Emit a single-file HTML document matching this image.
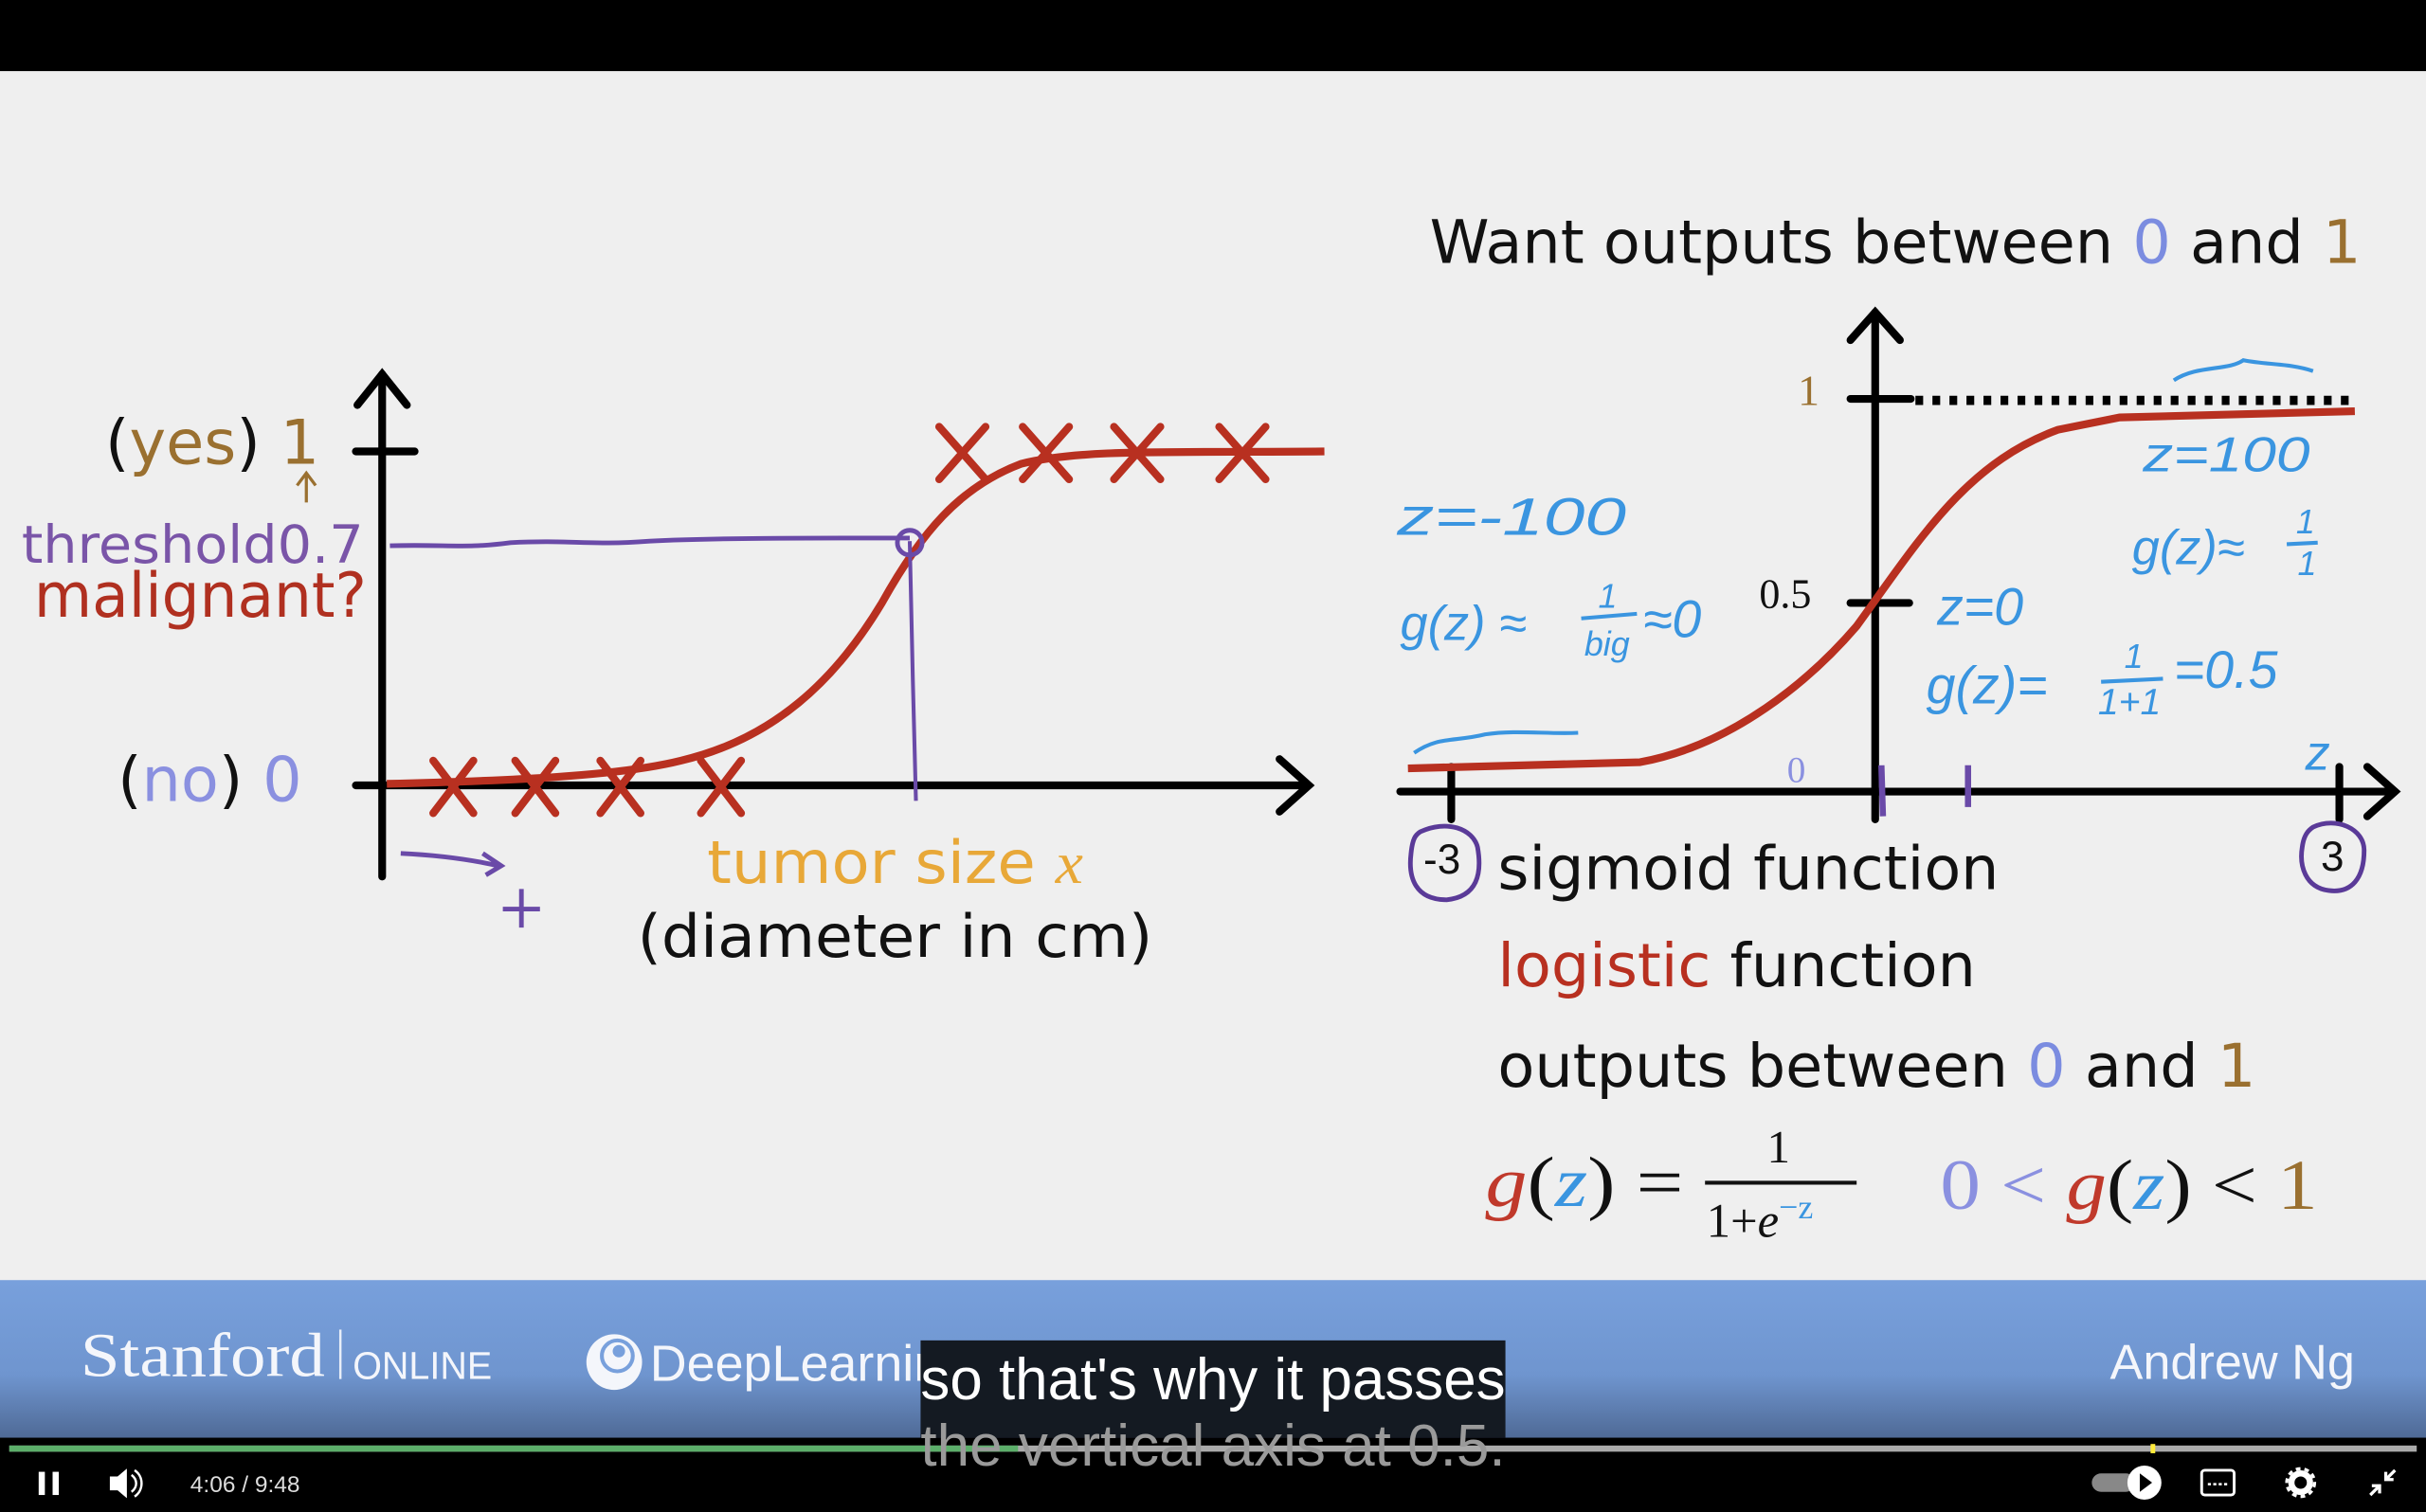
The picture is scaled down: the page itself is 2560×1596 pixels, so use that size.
<!DOCTYPE html>
<html><head><meta charset="utf-8"><style>
html,body{margin:0;padding:0;background:#000;width:2560px;height:1596px;overflow:hidden}
svg{display:block}
</style></head><body>
<svg width="2560" height="1596" viewBox="0 0 1568 978" preserveAspectRatio="none" xmlns="http://www.w3.org/2000/svg" font-family="DejaVu Sans, Liberation Sans, sans-serif">
<defs>
<linearGradient id="ft" x1="0" y1="0" x2="0" y2="1">
<stop offset="0" stop-color="#78a0dc"/><stop offset="0.6" stop-color="#6f95cf"/><stop offset="1" stop-color="#4f6a96"/>
</linearGradient>
</defs>
<rect x="0" y="0" width="1568" height="46" fill="#000"/>
<rect x="0" y="46" width="1568" height="783" fill="#efefef"/>
<rect x="0" y="828" width="1568" height="102" fill="url(#ft)"/>
<rect x="0" y="930" width="1568" height="48" fill="#000"/>

<!-- LEFT GRAPH -->
<g stroke="#000" stroke-width="5" fill="none" stroke-linecap="round">
<line x1="247" y1="242" x2="247" y2="567"/>
<polyline points="231,262 247,242 263,262"/>
<line x1="230" y1="508" x2="845" y2="508"/>
<polyline points="827,491 846,508 827,525"/>
<line x1="230" y1="292" x2="268" y2="292"/>
</g>
<path d="M250,507 C330,505 400,502 440,492 C500,478 540,440 570,390 C595,345 620,315 660,300 C700,290 760,293 856,292" stroke="#b83020" stroke-width="5" fill="none"/>
<g stroke="#b83020" stroke-width="5" stroke-linecap="round">
<path d="M280,492 L306,526 M306,492 L280,526"/>
<path d="M333,492 L359,526 M359,492 L333,526"/>
<path d="M388,492 L414,526 M414,492 L388,526"/>
<path d="M453,492 L479,526 M479,492 L453,526"/>
<path d="M607,276 L637,310 M637,276 L607,310"/>
<path d="M661,276 L691,310 M691,276 L661,310"/>
<path d="M720,276 L750,310 M750,276 L720,310"/>
<path d="M788,276 L818,310 M818,276 L788,310"/>
</g>
<path d="M252,353 C290,352 300,355 330,351 C370,349 380,353 420,350 C460,348 520,348 588,348" stroke="#6a4aa8" stroke-width="3" fill="none"/>
<path d="M588,350 L590,440 L592,518" stroke="#6a4aa8" stroke-width="2.5" fill="none"/>
<circle cx="588" cy="351" r="8" stroke="#6a4aa8" stroke-width="3" fill="none"/>
<path d="M259,552 C280,553 300,555 322,560 M312,552 L324,560 L314,566" stroke="#6a4aa8" stroke-width="3" fill="none"/>
<path d="M337,575 L337,600 M325,588 L349,588" stroke="#6a4aa8" stroke-width="3"/>
<path d="M198,325 L198,307 M192,314 L198,306 L204,314" stroke="#9a7030" stroke-width="2" fill="none"/>

<text x="68" y="300" font-size="40" fill="#111">(<tspan fill="#9a7030">yes</tspan>) <tspan fill="#9a7030">1</tspan></text>
<text x="14" y="364" font-size="34" fill="#7a55a8" textLength="221" lengthAdjust="spacingAndGlyphs">threshold0.7</text>
<text x="22" y="399" font-size="40" fill="#b03020" textLength="215" lengthAdjust="spacingAndGlyphs">malignant?</text>
<text x="76" y="518" font-size="40" fill="#111">(<tspan fill="#8a90e0">no</tspan>) <tspan fill="#8a90e0">0</tspan></text>
<text x="457" y="571" font-size="38" fill="#e8a838" textLength="243" lengthAdjust="spacingAndGlyphs">tumor size <tspan style="font-family:'Liberation Serif',serif;font-style:italic">x</tspan></text>
<text x="412" y="619" font-size="38" fill="#111" textLength="333" lengthAdjust="spacingAndGlyphs">(diameter in cm)</text>

<!-- RIGHT GRAPH -->
<text x="924" y="170" font-size="39" fill="#111" textLength="602" lengthAdjust="spacingAndGlyphs">Want outputs between <tspan fill="#7b8ce0">0</tspan> and <tspan fill="#9a7030">1</tspan></text>
<g stroke="#000" stroke-width="5" fill="none" stroke-linecap="round">
<line x1="1212" y1="202" x2="1212" y2="530"/>
<polyline points="1196,220 1212,202 1228,220"/>
<line x1="905" y1="512" x2="1545" y2="512"/>
<polyline points="1530,496 1548,512 1530,528"/>
<line x1="1196" y1="258" x2="1235" y2="258"/>
<line x1="1196" y1="390" x2="1234" y2="390"/>
<line x1="938" y1="496" x2="938" y2="530"/>
<line x1="1512" y1="496" x2="1512" y2="530"/>
</g>
<line x1="1238" y1="259" x2="1522" y2="259" stroke="#000" stroke-width="6" stroke-dasharray="5,6"/>
<path d="M910,497 L1060,493 C1120,482 1170,440 1200,405 C1240,350 1270,300 1330,278 L1370,270 L1522,266" stroke="#b83020" stroke-width="5" fill="none"/>
<path d="M1216,495 L1217,528 M1272,495 L1272,522" stroke="#6a4aa8" stroke-width="4"/>
<text x="1162" y="262" font-size="28" fill="#9a7030" style="font-family:'Liberation Serif',serif">1</text>
<text x="1137" y="393" font-size="27" fill="#111" style="font-family:'Liberation Serif',serif">0.5</text>
<text x="1155" y="506" font-size="24" fill="#8a90e0" style="font-family:'Liberation Serif',serif">0</text>
<g fill="#3a95e0" style="font-family:'Liberation Sans',sans-serif;font-style:italic">
<text x="1490" y="498" font-size="32">z</text>
<text x="903" y="346" font-size="34" textLength="148" lengthAdjust="spacingAndGlyphs">z=-100</text>
<text x="905" y="414" font-size="32">g(z) ≈</text>
<text x="1033" y="393" font-size="22">1</text>
<text x="1024" y="424" font-size="22">big</text>
<text x="1062" y="412" font-size="34">≈0</text>
<text x="1385" y="305" font-size="32" textLength="108" lengthAdjust="spacingAndGlyphs">z=100</text>
<text x="1378" y="365" font-size="32">g(z)≈</text>
<text x="1484" y="345" font-size="22">1</text>
<text x="1485" y="372" font-size="22">1</text>
<text x="1252" y="404" font-size="34">z=0</text>
<text x="1245" y="455" font-size="34">g(z)=</text>
<text x="1373" y="432" font-size="22">1</text>
<text x="1356" y="462" font-size="24">1+1</text>
<text x="1405" y="445" font-size="34">=0.5</text>
</g>
<g stroke="#3a95e0" stroke-width="2.5" fill="none">
<path d="M914,487 C930,476 940,480 960,475 C980,472 1000,475 1020,474"/>
<path d="M1405,246 C1420,236 1440,240 1450,233 C1465,236 1480,235 1495,240"/>
<line x1="1022" y1="400" x2="1058" y2="397"/>
<line x1="1478" y1="352" x2="1498" y2="351"/>
<line x1="1358" y1="441" x2="1398" y2="439"/>
</g>

<path d="M918,538 C935,530 952,536 955,548 C958,565 955,580 935,582 C915,582 910,568 912,552 C913,542 915,540 918,538Z" stroke="#5a3a98" stroke-width="3" fill="none"/>
<text x="920" y="565" font-size="27" fill="#111" style="font-family:'Liberation Sans',sans-serif">-3</text>
<path d="M1495,535 C1510,528 1528,536 1528,550 C1528,568 1520,578 1505,576 C1490,574 1486,560 1488,548 C1489,540 1492,537 1495,535Z" stroke="#5a3a98" stroke-width="3" fill="none"/>
<text x="1500" y="563" font-size="27" fill="#111" style="font-family:'Liberation Sans',sans-serif">3</text>

<text x="968" y="575" font-size="39" fill="#111" textLength="324" lengthAdjust="spacingAndGlyphs">sigmoid function</text>
<text x="968" y="638" font-size="39" fill="#111" textLength="309" lengthAdjust="spacingAndGlyphs"><tspan fill="#b83020">logistic</tspan> function</text>
<text x="968" y="703" font-size="39" fill="#111" textLength="490" lengthAdjust="spacingAndGlyphs">outputs between <tspan fill="#7b8ce0">0</tspan> and <tspan fill="#9a7030">1</tspan></text>
<g style="font-family:'Liberation Serif',serif" font-size="46">
<text x="960" y="780" textLength="128" lengthAdjust="spacingAndGlyphs"><tspan fill="#c0392b" font-style="italic">g</tspan><tspan fill="#111">(</tspan><tspan fill="#3a95e0" font-style="italic">z</tspan><tspan fill="#111">) =</tspan></text>
<text x="1142" y="752" font-size="30" fill="#111">1</text>
<line x1="1102" y1="765" x2="1200" y2="765" stroke="#111" stroke-width="2.5"/>
<text x="1103" y="800" font-size="31" fill="#111">1+<tspan font-style="italic">e</tspan><tspan fill="#3a95e0" font-size="22" dy="-12">−z</tspan></text>
<text x="1254" y="782" textLength="244" lengthAdjust="spacingAndGlyphs"><tspan fill="#8a90e0">0 &lt; </tspan><tspan fill="#c0392b" font-style="italic">g</tspan><tspan fill="#111">(</tspan><tspan fill="#3a95e0" font-style="italic">z</tspan><tspan fill="#111">) &lt; </tspan><tspan fill="#9a7030">1</tspan></text>
</g>

<!-- FOOTER -->
<text x="52" y="890" font-size="40" fill="#f4f6fb" style="font-family:'Liberation Serif',serif" textLength="158" lengthAdjust="spacingAndGlyphs">Stanford</text>
<line x1="220" y1="860" x2="220" y2="892" stroke="#e8eef8" stroke-width="1.5"/>
<text x="228" y="892" font-size="25" fill="#f4f6fb" style="font-family:'Liberation Sans',sans-serif" textLength="90" lengthAdjust="spacingAndGlyphs">ONLINE</text>
<circle cx="397" cy="881" r="18" fill="#f4f6fb"/>
<circle cx="399" cy="877" r="10" fill="none" stroke="#78a0dc" stroke-width="2.5"/>
<circle cx="400" cy="874" r="4" fill="#78a0dc"/>
<text x="420" y="893" font-size="33" fill="#f4f6fb" style="font-family:'Liberation Sans',sans-serif">DeepLearning.AI</text>
<text x="1522" y="892" font-size="32" fill="#f4f6fb" style="font-family:'Liberation Sans',sans-serif" text-anchor="end">Andrew Ng</text>

<!-- SUBTITLE -->
<rect x="595" y="867" width="378" height="63" fill="#141a22"/>
<text x="595" y="905" font-size="38" fill="#fff" style="font-family:'Liberation Sans',sans-serif" textLength="378" lengthAdjust="spacingAndGlyphs">so that's why it passes</text>

<!-- PROGRESS -->
<rect x="6" y="935" width="1556" height="4" fill="#aaa"/>
<rect x="6" y="935" width="652" height="4" fill="#5cae6a"/>
<rect x="1390" y="934" width="3" height="6" fill="#ffeb3b"/>
<text x="595" y="948" font-size="38" fill="#9a9a9a" style="font-family:'Liberation Sans',sans-serif" textLength="378" lengthAdjust="spacingAndGlyphs">the vertical axis at 0.5.</text>

<!-- CONTROLS -->
<rect x="25" y="952" width="4" height="15" fill="#fff"/><rect x="34" y="952" width="4" height="15" fill="#fff"/>
<path d="M71,955 L76,955 L82,950 L82,969 L76,964 L71,964Z" fill="#fff"/>
<path d="M85,954 C89,957 89,962 85,965 M87,951 C93,955 93,964 87,968" stroke="#fff" stroke-width="1.5" fill="none"/>
<text x="123" y="965" font-size="15" fill="#ddd" style="font-family:'Liberation Sans',sans-serif">4:06  /  9:48</text>
<rect x="1352" y="953" width="28" height="12" rx="6" fill="#888"/>
<circle cx="1386" cy="959" r="11" fill="#fff"/>
<path d="M1383,953 L1391,959 L1383,965Z" fill="#000"/>
<rect x="1423" y="951" width="21" height="16" rx="2" fill="none" stroke="#fff" stroke-width="1.8"/>
<path d="M1427,960 h13" stroke="#fff" stroke-width="1.5" stroke-dasharray="2,1.5"/>
<circle cx="1487" cy="959" r="6" fill="none" stroke="#fff" stroke-width="4"/>
<circle cx="1487" cy="959" r="9" fill="none" stroke="#fff" stroke-width="2" stroke-dasharray="3,2.6"/>
<path d="M1532,967 L1538,961 M1533,961 L1538,961 L1538,966 M1548,951 L1542,957 M1542,952 L1542,957 L1547,957" stroke="#fff" stroke-width="2" fill="none"/>
</svg>
</body></html>
